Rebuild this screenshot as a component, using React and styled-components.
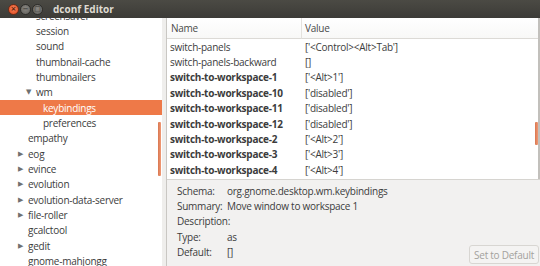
import React from "react";
import styled, { createGlobalStyle } from "styled-components";

const Global = createGlobalStyle`
  html, body { margin: 0; padding: 0; background: #f2f1f0; }
  body { font-family: "Open Sans", "Noto Sans", sans-serif; letter-spacing: -0.25px; }
`;

const Window = styled.div`
  width: 540px;
  height: 266px;
  display: flex;
  flex-direction: column;
  overflow: hidden;
  background: #f2f1f0;
  position: relative;
`;

const TitleBar = styled.div`
  height: 18px;
  flex: 0 0 18px;
  display: flex;
  align-items: center;
  padding-left: 8px;
  gap: 1px;
  background: linear-gradient(#4b4a44, #3c3b37);
  position: relative;
  z-index: 2;
`;

const WinButton = styled.span`
  width: 11px;
  height: 11px;
  border-radius: 50%;
  box-sizing: border-box;
  border: 1px solid ${p => (p.$close ? "#6e2b16" : "#2e2d2a")};
  background: ${p =>
    p.$close
      ? "radial-gradient(circle at 50% 40%, #f5845c, #e2471b)"
      : "radial-gradient(circle at 50% 40%, #8a8883, #5f5d58)"};
  display: flex;
  align-items: center;
  justify-content: center;
  color: ${p => (p.$close ? "#5a1d0a" : "#3a3935")};
  font-size: 7px;
  line-height: 1;
  letter-spacing: 0;
  font-family: "DejaVu Sans", sans-serif;
  font-weight: bold;
`;

const Title = styled.span`
  margin-left: 9px;
  color: #dfdbd2;
  font-weight: 700;
  font-size: 10px;
  letter-spacing: 0;
`;

const Body = styled.div`
  flex: 1;
  display: flex;
  min-height: 0;
`;

const TreePane = styled.div`
  width: 162px;
  flex: 0 0 162px;
  background: #ffffff;
  overflow: hidden;
  position: relative;
`;

const TreeList = styled.div`
  margin-top: -10px;
  display: flex;
  flex-direction: column;
`;

const TreeRow = styled.div`
  height: 15.35px;
  flex: 0 0 15.35px;
  display: flex;
  align-items: center;
  padding-left: ${p => p.$indent}px;
  font-size: 10px;
  color: ${p => (p.$selected ? "#ffffff" : "#3c3c3c")};
  background: ${p => (p.$selected ? "#ee7948" : "transparent")};
  white-space: nowrap;
`;

const Expander = styled.span`
  width: 10px;
  flex: 0 0 10px;
  color: #707070;
  font-size: 7px;
  font-family: "DejaVu Sans", sans-serif;
  display: flex;
  align-items: center;
`;

const Handle = styled.div`
  width: 4px;
  flex: 0 0 4px;
  background: #efeeec;
  border-right: 1px solid #c9c7c3;
`;

const RightSide = styled.div`
  flex: 1;
  display: flex;
  flex-direction: column;
  min-width: 0;
`;

const ListPane = styled.div`
  background: #ffffff;
  height: 161px;
  flex: 0 0 161px;
  overflow: hidden;
  border-right: 2px solid #c2c0bc;
  position: relative;
  display: flex;
  flex-direction: column;
`;

const Grid = styled.div`
  display: grid;
  grid-template-columns: 134px 1fr;
`;

const HeaderCell = styled.div`
  height: 20px;
  display: flex;
  align-items: center;
  padding-left: ${p => p.$pad}px;
  font-size: 10px;
  color: #4a4a4a;
  background: linear-gradient(#ffffff, #f8f8f7);
  border-bottom: 1px solid #dcdad6;
  border-left: ${p => (p.$sep ? "1px solid #e4e2de" : "none")};
`;

const Cell = styled.div`
  height: 15.4px;
  display: flex;
  align-items: center;
  padding-left: ${p => p.$pad}px;
  font-size: 10px;
  font-weight: ${p => (p.$bold ? 700 : 400)};
  color: #3c3c3c;
  white-space: nowrap;
  overflow: hidden;
`;

const ScrollMark = styled.div`
  position: absolute;
  width: 3px;
  border-radius: 1px;
  background: linear-gradient(90deg, #d9764f, #f09a76);
`;

const InfoPanel = styled.div`
  flex: 1;
  border-top: 1px solid #d6d4d0;
  padding: 3px 0 0 10px;
  position: relative;
  display: grid;
  grid-template-columns: 50px 1fr;
  grid-auto-rows: 15.4px;
  align-content: start;
`;

const InfoLabel = styled.div`
  font-size: 10px;
  color: #3c3c3c;
  display: flex;
  align-items: center;
`;

const InfoValue = styled(InfoLabel)``;

const DefaultButton = styled.button`
  position: absolute;
  right: 1px;
  bottom: 2px;
  height: 19px;
  padding: 0 4px;
  font-family: inherit;
  letter-spacing: -0.25px;
  font-size: 10px;
  color: #a3a19d;
  background: #f4f3f2;
  border: 1px solid #d8d6d2;
  border-radius: 3px;
`;

const tree = [
  { t: "screensaver", i: 36 },
  { t: "session", i: 36 },
  { t: "sound", i: 36 },
  { t: "thumbnail-cache", i: 36 },
  { t: "thumbnailers", i: 36 },
  { t: "wm", i: 26, e: "▼" },
  { t: "keybindings", i: 43, s: true },
  { t: "preferences", i: 43 },
  { t: "empathy", i: 28 },
  { t: "eog", i: 18, e: "▶" },
  { t: "evince", i: 18, e: "▶" },
  { t: "evolution", i: 18, e: "▶" },
  { t: "evolution-data-server", i: 18, e: "▶" },
  { t: "file-roller", i: 18, e: "▶" },
  { t: "gcalctool", i: 28 },
  { t: "gedit", i: 18, e: "▶" },
  { t: "gnome-mahjongg", i: 28 },
];

const rows = [
  ["switch-panels", "['<Control><Alt>Tab']", false],
  ["switch-panels-backward", "[]", false],
  ["switch-to-workspace-1", "['<Alt>1']", true],
  ["switch-to-workspace-10", "['disabled']", true],
  ["switch-to-workspace-11", "['disabled']", true],
  ["switch-to-workspace-12", "['disabled']", true],
  ["switch-to-workspace-2", "['<Alt>2']", true],
  ["switch-to-workspace-3", "['<Alt>3']", true],
  ["switch-to-workspace-4", "['<Alt>4']", true],
];

const info = [
  ["Schema:", "org.gnome.desktop.wm.keybindings"],
  ["Summary:", "Move window to workspace 1"],
  ["Description:", ""],
  ["Type:", "as"],
  ["Default:", "[]"],
];

export default function App() {
  return (
    <>
      <Global />
      <Window>
        <TitleBar>
          <WinButton $close>×</WinButton>
          <WinButton>−</WinButton>
          <WinButton>□</WinButton>
          <Title>dconf Editor</Title>
        </TitleBar>
        <Body>
          <TreePane>
            <TreeList>
              {tree.map(r => (
                <TreeRow key={r.t} $indent={r.i} $selected={r.s}>
                  {r.e && <Expander>{r.e}</Expander>}
                  {r.t}
                </TreeRow>
              ))}
            </TreeList>
            <ScrollMark style={{ left: 158, top: 104, height: 54 }} />
          </TreePane>
          <Handle />
          <RightSide>
            <ListPane>
              <Grid>
                <HeaderCell $pad={4}>Name</HeaderCell>
                <HeaderCell $pad={3} $sep>Value</HeaderCell>
                {rows.map(([n, v, b]) => (
                  <React.Fragment key={n}>
                    <Cell $pad={3} $bold={b}>{n}</Cell>
                    <Cell $pad={4}>{v}</Cell>
                  </React.Fragment>
                ))}
              </Grid>
              <ScrollMark style={{ right: 0, top: 104, height: 23 }} />
            </ListPane>
            <InfoPanel>
              {info.map(([l, v]) => (
                <React.Fragment key={l}>
                  <InfoLabel>{l}</InfoLabel>
                  <InfoValue>{v}</InfoValue>
                </React.Fragment>
              ))}
              <DefaultButton disabled>Set to Default</DefaultButton>
            </InfoPanel>
          </RightSide>
        </Body>
      </Window>
    </>
  );
}
